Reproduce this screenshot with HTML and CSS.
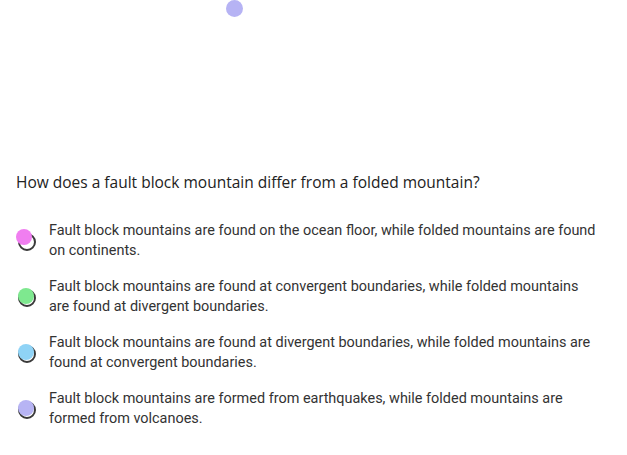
FILE: index.html
```html
<!DOCTYPE html>
<html>
<head>
<meta charset="utf-8">
<link rel="stylesheet" href="styles.css">
</head>
<body>
<div class="page">
  <div class="top"><span class="dot dot-top"></span></div>
  <div class="question">How does a fault block mountain differ from a folded mountain?</div>
  <ul class="options">
    <li class="option">
      <span class="radio"><span class="ring"></span><span class="fill pink"></span></span>
      <span class="text">Fault block mountains are found on the ocean floor, while folded mountains are found on continents.</span>
    </li>
    <li class="option">
      <span class="radio"><span class="ring"></span><span class="fill green"></span></span>
      <span class="text">Fault block mountains are found at convergent boundaries, while folded mountains are found at divergent boundaries.</span>
    </li>
    <li class="option">
      <span class="radio"><span class="ring"></span><span class="fill blue"></span></span>
      <span class="text">Fault block mountains are found at divergent boundaries, while folded mountains are found at convergent boundaries.</span>
    </li>
    <li class="option">
      <span class="radio"><span class="ring"></span><span class="fill lav"></span></span>
      <span class="text">Fault block mountains are formed from earthquakes, while folded mountains are formed from volcanoes.</span>
    </li>
  </ul>
</div>
</body>
</html>
```
FILE: styles.css
```css
html, body { margin: 0; padding: 0; background: #fff; }
.page { width: 627px; height: 455px; overflow: hidden; }
.top { height: 171px; position: relative; }
.dot-top {
  position: absolute; left: 226px; top: 0px;
  width: 17px; height: 17px; border-radius: 50%; background: #b6b3f4;
}
.question {
  font-family: "Open Sans", sans-serif;
  font-size: 15.5px; color: #222;
  padding-left: 16px; line-height: 22px;
}
.options { list-style: none; margin: 28px 0 0 0; padding: 0; }
.option { display: flex; align-items: flex-start; height: 56px; }
.radio { position: relative; width: 49px; flex: none; height: 40px; }
.ring {
  position: absolute; left: 18px; top: 12px;
  width: 14px; height: 14px; border: 2px solid #3a3a3a; border-radius: 50%;
}
.fill {
  position: absolute; left: 18px; top: 11px;
  width: 16px; height: 16px; border-radius: 50%;
}
.option .fill.pink { left: 16px; top: 8px; }
.pink { background: #f07ef0; }
.green { background: #7ee88f; }
.blue { background: #8fd3f6; }
.lav { background: #b7b4f4; }
.text {
  font-family: Roboto, sans-serif; font-size: 14.45px; color: #333;
  line-height: 20px; width: 549px;
}
```
